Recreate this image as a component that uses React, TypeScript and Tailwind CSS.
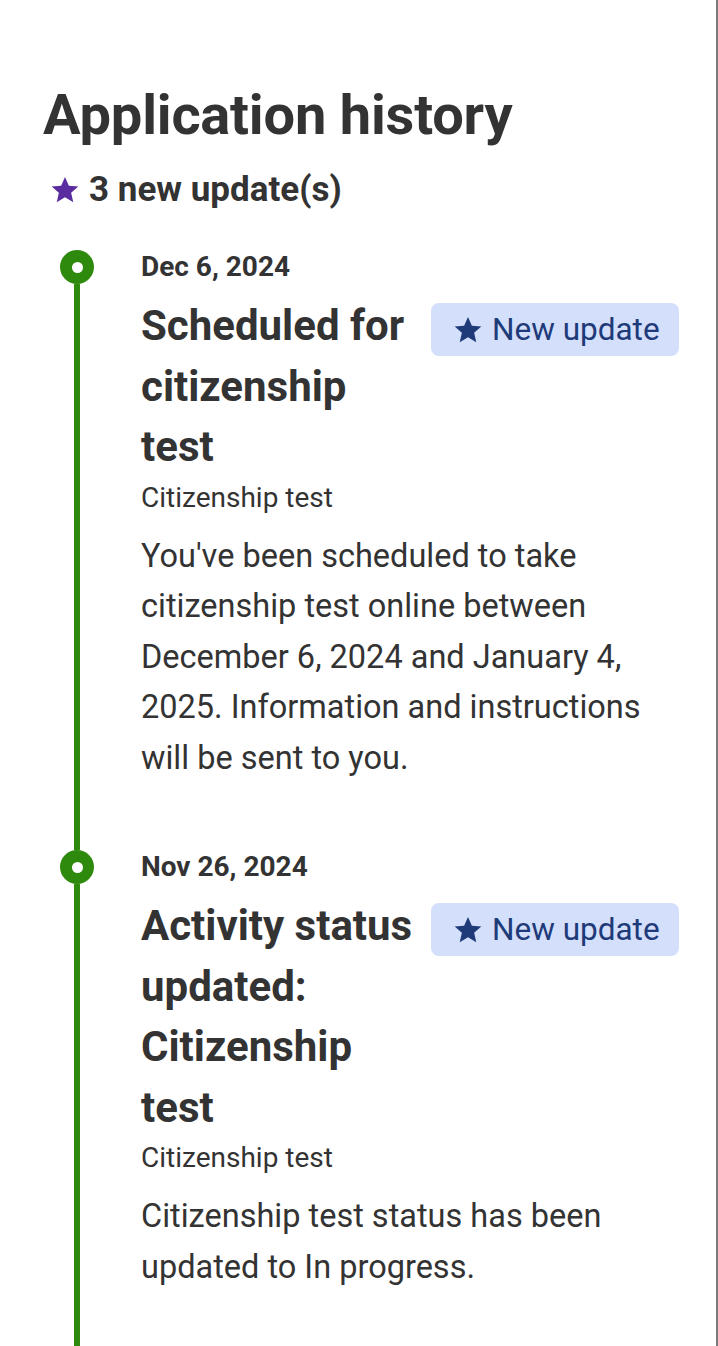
const updates = [
  {
    date: "Dec 6, 2024",
    title: "Scheduled for citizenship test",
    category: "Citizenship test",
    body: "You've been scheduled to take citizenship test online between December 6, 2024 and January 4, 2025. Information and instructions will be sent to you.",
  },
  {
    date: "Nov 26, 2024",
    title: "Activity status updated: Citizenship test",
    category: "Citizenship test",
    body: "Citizenship test status has been updated to In progress.",
  },
];

function Star({ className }: { className?: string }) {
  return (
    <svg viewBox="0 0 24 24" className={className} fill="currentColor" aria-hidden="true">
      <path d="M12 2.2l2.9 6.6 7.1.6-5.4 4.7 1.6 7-6.2-3.7-6.2 3.7 1.6-7L2 9.4l7.1-.6z" strokeLinejoin="round" />
    </svg>
  );
}

export default function App() {
  return (
    <div className="min-h-screen border-r-2 border-[#7a7a7a] bg-white font-['Roboto',sans-serif] text-[#333333]">
      <main className="pl-[43px] pr-[37px] pt-[82px]">
        {/* Header */}
        <h1 className="text-[56px] font-bold leading-[66px] tracking-[-0.2px]">Application history</h1>
        <div className="mt-[22px] flex items-center gap-[8px] pl-[6px]">
          <Star className="h-[32px] w-[32px] text-[#5a2ca0]" />
          <span className="text-[35px] font-bold leading-[40px]">3 new update(s)</span>
        </div>

        {/* Timeline */}
        <div className="mt-[40px]">
          {updates.map((u) => (
            <div key={u.date} className="flex">
              <div className="flex w-[98px] shrink-0 flex-col items-center pr-[30px]">
                <div className="flex h-[34px] w-[34px] shrink-0 items-center justify-center rounded-full bg-[#2e8a0c]">
                  <div className="h-[11px] w-[11px] rounded-full bg-white" />
                </div>
                <div className="w-[6px] flex-1 bg-[#2e8a0c]" />
              </div>
              <div className="min-w-0 flex-1 pb-[67px]">
                <div className="text-[28px] font-bold leading-[34px]">{u.date}</div>
                <div className="mt-[12px] flex items-start gap-[16px]">
                  <h2 className="min-w-0 flex-1 text-[42px] font-bold leading-[60.5px]">{u.title}</h2>
                  <span className="mt-[7px] inline-flex h-[53px] w-[248px] shrink-0 items-center gap-[8px] rounded-[8px] bg-[#d3dffb] pl-[21px] text-[31.5px] text-[#1e3a78]">
                    <Star className="h-[32px] w-[32px]" />
                    New update
                  </span>
                </div>
                <div className="mt-[4px] text-[28px] leading-[32px]">{u.category}</div>
                <p className="mt-[17px] text-[32.5px] leading-[50.5px]">{u.body}</p>
              </div>
            </div>
          ))}
        </div>
      </main>
    </div>
  );
}
